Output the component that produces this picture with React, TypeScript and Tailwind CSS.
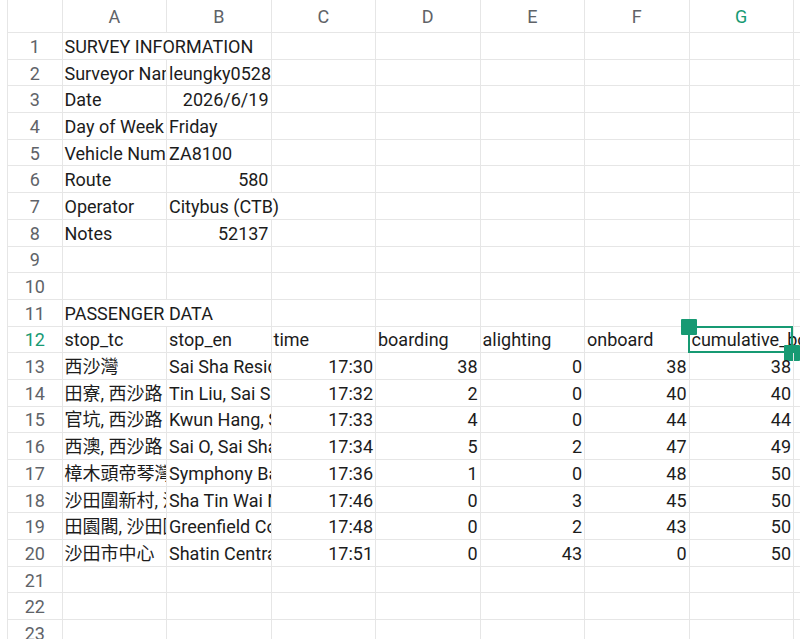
import React from "react";

type Cell = { t?: string; right?: boolean; span2?: boolean; free?: boolean };

const FONT = 'Roboto, "Noto Sans CJK TC", "Liberation Sans", sans-serif';

const COLS = ["A", "B", "C", "D", "E", "F", "G"];

// Sheet contents, one array of cells A..G per row
const ROWS: Cell[][] = [
  [{ t: "SURVEY INFORMATION", span2: true }, {}, {}, {}, {}, {}],
  [{ t: "Surveyor Name" }, { t: "leungky0528" }, {}, {}, {}, {}, {}],
  [{ t: "Date" }, { t: "2026/6/19", right: true }, {}, {}, {}, {}, {}],
  [{ t: "Day of Week" }, { t: "Friday" }, {}, {}, {}, {}, {}],
  [{ t: "Vehicle Number" }, { t: "ZA8100" }, {}, {}, {}, {}, {}],
  [{ t: "Route" }, { t: "580", right: true }, {}, {}, {}, {}, {}],
  [{ t: "Operator" }, { t: "Citybus (CTB)", span2: true }, {}, {}, {}, {}],
  [{ t: "Notes" }, { t: "52137", right: true }, {}, {}, {}, {}, {}],
  [{}, {}, {}, {}, {}, {}, {}],
  [{}, {}, {}, {}, {}, {}, {}],
  [{ t: "PASSENGER DATA", span2: true }, {}, {}, {}, {}, {}],
  [
    { t: "stop_tc" },
    { t: "stop_en" },
    { t: "time" },
    { t: "boarding" },
    { t: "alighting" },
    { t: "onboard" },
    { t: "cumulative_boarding", free: true },
  ],
];

const DATA: [string, string, string, number, number, number, number][] = [
  ["西沙灣", "Sai Sha Residence", "17:30", 38, 0, 38, 38],
  ["田寮, 西沙路", "Tin Liu, Sai Sha Road", "17:32", 2, 0, 40, 40],
  ["官坑, 西沙路", "Kwun Hang, Sai Sha Road", "17:33", 4, 0, 44, 44],
  ["西澳, 西沙路", "Sai O, Sai Sha Road", "17:34", 5, 2, 47, 49],
  ["樟木頭帝琴灣", "Symphony Bay", "17:36", 1, 0, 48, 50],
  ["沙田圍新村, 沙田圍路", "Sha Tin Wai New Village", "17:46", 0, 3, 45, 50],
  ["田園閣, 沙田圍路", "Greenfield Court", "17:48", 0, 2, 43, 50],
  ["沙田市中心", "Shatin Central", "17:51", 0, 43, 0, 50],
];

for (const d of DATA) {
  ROWS.push([
    { t: d[0] },
    { t: d[1] },
    { t: d[2], right: true },
    { t: String(d[3]), right: true },
    { t: String(d[4]), right: true },
    { t: String(d[5]), right: true },
    { t: String(d[6]), right: true },
  ]);
}
// empty tail rows 21..23
for (let i = 0; i < 3; i++) ROWS.push([{}, {}, {}, {}, {}, {}, {}]);

const SEL_ROW = 12;

function SheetCell({ c, isSel }: { c: Cell; isSel: boolean }) {
  const base =
    "relative flex items-center whitespace-nowrap border-r border-b border-[#e6e6e6] pt-[2px] text-[18px] text-[#1c1c1c]";
  const cls = [
    base,
    c.span2 ? "col-span-2" : "",
    c.free ? "overflow-visible" : "overflow-hidden",
    c.right ? "justify-end pr-[2px]" : "justify-start pl-[2px]",
  ].join(" ");
  return (
    <div className={cls}>
      <span className="leading-none">{c.t}</span>
      {isSel && (
        <>
          <div className="pointer-events-none absolute left-[-1.5px] top-[-1px] right-0 bottom-[-1px] border-2 border-[#179a73]" />
          <div className="absolute left-[-8.5px] top-[-8px] h-[16px] w-[16px] rounded-[1px] bg-[#179a73]" />
          <div className="absolute right-[-7px] bottom-[-9px] h-[16px] w-[16px] rounded-[1px] bg-[#179a73]" />
        </>
      )}
    </div>
  );
}

export default function App() {
  return (
    <div
      className="h-[639px] w-[800px] overflow-hidden bg-white"
      style={{ fontFamily: FONT }}
    >
      <div className="grid grid-cols-[8px_54.5px_repeat(7,104.5px)_1fr] grid-rows-[33px_repeat(23,26.7px)]">
        {/* left gutter */}
        <div className="row-span-24 border-r border-[#e6e6e6]" />

        {/* column header row */}
        <div className="border-r border-b border-[#e6e6e6]" />
        {COLS.map((l) => (
          <div
            key={l}
            className={
              "flex items-center justify-center border-r border-b border-[#e6e6e6] text-[18px] " +
              (l === "G" ? "text-[#179a73]" : "text-[#606368]")
            }
          >
            {l}
          </div>
        ))}
        <div className="border-b border-[#e6e6e6]" />

        {ROWS.map((cells, ri) => {
          const n = ri + 1;
          return (
            <React.Fragment key={n}>
              <div
                className={
                  "flex items-center justify-center border-r border-b border-[#e6e6e6] pt-[2px] text-[18px] leading-none " +
                  (n === SEL_ROW ? "text-[#179a73]" : "text-[#606368]")
                }
              >
                {n}
              </div>
              {cells.map((c, ci) => (
                <SheetCell key={ci} c={c} isSel={n === SEL_ROW && ci === 6} />
              ))}
              <div className="border-b border-[#e6e6e6]" />
            </React.Fragment>
          );
        })}
      </div>
    </div>
  );
}
